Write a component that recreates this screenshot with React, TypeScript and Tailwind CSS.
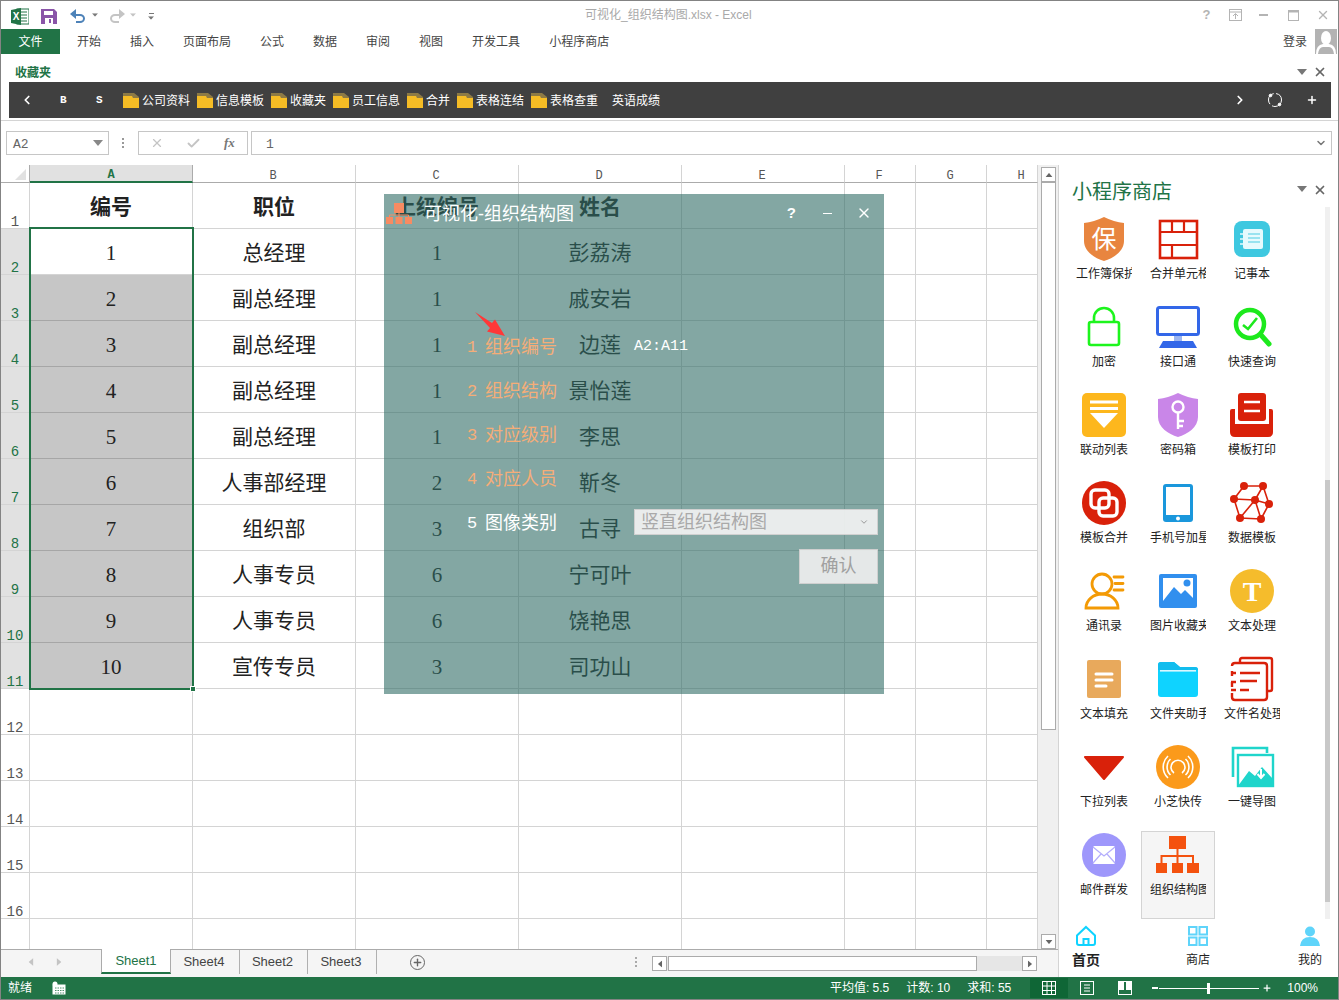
import React from 'react';
import { X, ChevronLeft, ChevronRight, Plus, ChevronDown, Check } from 'lucide-react';

const TABS = ['开始', '插入', '页面布局', '公式', '数据', '审阅', '视图', '开发工具', '小程序商店'];
const FAVORITES = ['公司资料', '信息模板', '收藏夹', '员工信息', '合并', '表格连结', '表格查重'];
const COLUMNS = ['A', 'B', 'C', 'D', 'E', 'F', 'G', 'H'];

const ROWS = [
  ['1', '总经理', '1', '彭荔涛'],
  ['2', '副总经理', '1', '戚安岩'],
  ['3', '副总经理', '1', '边莲'],
  ['4', '副总经理', '1', '景怡莲'],
  ['5', '副总经理', '1', '李思'],
  ['6', '人事部经理', '2', '靳冬'],
  ['7', '组织部', '3', '古寻'],
  ['8', '人事专员', '6', '宁可叶'],
  ['9', '人事专员', '6', '饶艳思'],
  ['10', '宣传专员', '3', '司功山'],
];

const RED = '#d9210a';

const Ico: React.FC<{ children: React.ReactNode }> = ({ children }) => (
  <svg width="48" height="48" viewBox="0 0 48 48" className="shrink-0">
    {children}
  </svg>
);

const SHIELD = 'M4 8Q14 7 24 2Q34 7 44 8V26C44 36 34 43 24 46C14 43 4 36 4 26Z';

const TOOLS: { label: string; icon: React.ReactNode; active?: boolean }[] = [
  {
    label: '工作簿保护',
    icon: (
      <>
        <path d={SHIELD} fill="#e8853f" />
        <text x="24" y="33" textAnchor="middle" fontSize="25" fill="#fff" fontFamily="Noto Sans CJK SC">保</text>
      </>
    ),
  },
  {
    label: '合并单元格',
    icon: (
      <g fill="none" stroke={RED} strokeWidth="2.2">
        <rect x="6" y="6" width="37" height="37" strokeWidth="2.6" />
        <path d="M6 17H43M6 30H43M18 6V17M30 6V17M18 30V43" />
      </g>
    ),
  },
  {
    label: '记事本',
    icon: (
      <>
        <rect x="6" y="6" width="36" height="36" rx="8" fill="#3ec8e0" />
        <rect x="15" y="14" width="20" height="20" rx="2" fill="#e6fafd" />
        <path d="M20 19H32M20 23H32M20 27H32" stroke="#7fdcec" strokeWidth="1.6" />
        <path d="M12 19H16M12 24H16M12 29H16" stroke="#e6fafd" strokeWidth="1.6" />
      </>
    ),
  },
  {
    label: '加密',
    icon: (
      <g fill="none" stroke="#1df51d" strokeWidth="2.6">
        <rect x="9" y="19" width="30" height="23" rx="2" />
        <path d="M14 19V15A10 10 0 0 1 34 15V19" />
      </g>
    ),
  },
  {
    label: '接口通',
    icon: (
      <>
        <rect x="3.5" y="4.5" width="41" height="27" rx="2" fill="#fff" stroke="#3367e8" strokeWidth="3" />
        <rect x="20" y="33" width="8" height="5" fill="#9db6f0" />
        <path d="M5 45L9 38H39L43 45Z" fill="#3367e8" />
      </>
    ),
  },
  {
    label: '快速查询',
    icon: (
      <g fill="none" stroke="#1de91d">
        <circle cx="22" cy="21" r="14" strokeWidth="4.5" />
        <path d="M33 32L41 41" strokeWidth="5" strokeLinecap="round" />
        <path d="M15 22L20 26L29 15" strokeWidth="2.6" />
      </g>
    ),
  },
  {
    label: '联动列表',
    icon: (
      <>
        <rect x="2" y="2" width="44" height="44" rx="5" fill="#fdb71d" />
        <path d="M10 11H38M10 17.5H38" stroke="#fff" strokeWidth="3" />
        <path d="M10 22H38L24 37Z" fill="#fff" />
      </>
    ),
  },
  {
    label: '密码箱',
    icon: (
      <>
        <path d={SHIELD} fill="#c986e8" />
        <g fill="none" stroke="#fff" strokeWidth="2.4">
          <circle cx="24" cy="16" r="5.5" />
          <path d="M24 22V38M24 30H30M24 35H29" />
        </g>
      </>
    ),
  },
  {
    label: '模板打印',
    icon: (
      <>
        <rect x="10" y="2" width="28" height="28" rx="3" fill={RED} />
        <path d="M16 11H32M16 20H32" stroke="#fff" strokeWidth="2.4" />
        <path d="M2 20Q2 18 4 18H7V33H41V18H43Q45 18 45 20V41Q45 46 40 46H7Q2 46 2 41Z" fill={RED} />
      </>
    ),
  },
  {
    label: '模板合并',
    icon: (
      <>
        <circle cx="24" cy="24" r="22" fill={RED} />
        <g fill="none" stroke="#fff" strokeWidth="3.4">
          <rect x="11" y="11" width="18" height="18" rx="4" />
          <rect x="19" y="19" width="18" height="18" rx="4" />
        </g>
      </>
    ),
  },
  {
    label: '手机号加星',
    icon: (
      <>
        <rect x="9" y="5" width="30" height="38" rx="3" fill="#1a97dc" />
        <rect x="12" y="8" width="24" height="28" fill="#fff" />
        <circle cx="24" cy="39.5" r="2" fill="#fff" />
      </>
    ),
  },
  {
    label: '数据模板',
    icon: (
      <>
        <path
          d="M16 7L35 7M16 7L6 20M35 7L27 21M6 20L27 21M35 7L41 25M27 21L41 25M27 21L12 39M6 20L12 39M12 39L33 40M41 25L33 40M27 21L33 40"
          stroke={RED}
          strokeWidth="1.6"
          fill="none"
        />
        {[[16, 7], [35, 7], [6, 20], [27, 21], [41, 25], [12, 39], [33, 40]].map(([cx, cy]) => (
          <circle key={`${cx}-${cy}`} cx={cx} cy={cy} r="4" fill={RED} />
        ))}
      </>
    ),
  },
  {
    label: '通讯录',
    icon: (
      <g fill="none" stroke="#f39a05" strokeWidth="2.8">
        <circle cx="22" cy="17" r="10" />
        <path d="M6 41A16 14 0 0 1 38 41Z" />
        <path d="M34 10H43M35 16.5H43M34 23H43" strokeLinecap="round" />
      </g>
    ),
  },
  {
    label: '图片收藏夹',
    icon: (
      <>
        <rect x="5" y="7" width="38" height="34" rx="2" fill="#318fee" />
        <rect x="9" y="11" width="30" height="23" fill="#fff" />
        <path d="M9 34L20 20L27 27L31 23L39 31V34Z" fill="#318fee" />
        <circle cx="33" cy="16" r="3.5" fill="#318fee" />
      </>
    ),
  },
  {
    label: '文本处理',
    icon: (
      <>
        <circle cx="24" cy="24" r="22" fill="#f5bc2c" />
        <text x="24" y="34" textAnchor="middle" fontSize="28" fontWeight="700" fill="#fff" fontFamily="Liberation Serif">T</text>
      </>
    ),
  },
  {
    label: '文本填充',
    icon: (
      <>
        <rect x="7" y="5" width="34" height="38" rx="2" fill="#e8a95c" />
        <path d="M16 19H32M16 25H32M16 31H26" stroke="#fff" strokeWidth="3" strokeLinecap="round" />
      </>
    ),
  },
  {
    label: '文件夹助手',
    icon: (
      <>
        <path d="M4 10Q4 7 7 7H20L26 12H41Q44 12 44 15V39Q44 42 41 42H7Q4 42 4 39Z" fill="#0fd3ff" />
        <path d="M4 10Q4 7 7 7H20L26 12H41Q44 12 44 15H4Z" fill="#12bdee" />
        <rect x="6" y="15" width="36" height="1.6" fill="#d9f7ff" />
      </>
    ),
  },
  {
    label: '文件名处理',
    icon: (
      <g fill="none" stroke={RED} strokeWidth="2.4">
        <path d="M12 8V5Q12 3 14 3H42Q44 3 44 5V34Q44 36 42 36H40" />
        <path d="M7 8H36Q39 8 39 11V42Q39 45 36 45H7Q4 45 4 42V38M4 32V27M4 21V16M4 11Q4 8 7 8" />
        <path d="M3 18H8M12 18H32M3 27H8M12 26H29M3 35H8M12 35H21" strokeWidth="2.6" />
      </g>
    ),
  },
  {
    label: '下拉列表',
    icon: <path d="M5 14H43L24 36Z" fill={RED} stroke={RED} strokeWidth="2" strokeLinejoin="round" />,
  },
  {
    label: '小芝快传',
    icon: (
      <>
        <circle cx="24" cy="24" r="22" fill="#fb9a1b" />
        <g fill="none" stroke="#fff" strokeWidth="1.6">
          <path d="M20 30A7 7 0 1 1 28 30" />
          <path d="M16.5 16A11 11 0 0 0 16.5 32M31.5 16A11 11 0 0 1 31.5 32" />
          <path d="M14 13A15 15 0 0 0 14 35M34 13A15 15 0 0 1 34 35" />
        </g>
      </>
    ),
  },
  {
    label: '一键导图',
    icon: (
      <>
        <path d="M5 34V5H39V10" fill="none" stroke="#1fd5cb" strokeWidth="2.6" />
        <rect x="10" y="12" width="35" height="31" fill="#fff" stroke="#1fd5cb" strokeWidth="2.4" />
        <path d="M10 43L21 28L27 33L34 24L45 36V43Z" fill="#1fd5cb" />
        <path d="M33 26V34M29.5 31L33 35L36.5 31" fill="none" stroke="#fff" strokeWidth="2" />
      </>
    ),
  },
  {
    label: '邮件群发',
    icon: (
      <>
        <circle cx="24" cy="24" r="22" fill="#9e97fb" />
        <rect x="13" y="15" width="22" height="18" rx="1.5" fill="#fff" />
        <path d="M13 16L24 25L35 16M13 32L21 23M35 32L27 23" fill="none" stroke="#b3adfc" strokeWidth="1.2" />
      </>
    ),
  },
  {
    label: '组织结构图',
    active: true,
    icon: (
      <g fill="#f4520f">
        <rect x="15" y="5" width="17" height="13" />
        <rect x="2" y="32" width="11" height="10" />
        <rect x="18" y="32" width="11" height="10" />
        <rect x="33" y="32" width="12" height="10" />
        <path d="M23.5 18V32M7.5 32V25H39V32" fill="none" stroke="#f4520f" strokeWidth="2" />
      </g>
    ),
  },
];

const CaretDown: React.FC<{ className?: string }> = ({ className }) => (
  <svg width="10" height="6" viewBox="0 0 10 6" className={className}>
    <path d="M0 0H10L5 6Z" fill="currentColor" />
  </svg>
);

const Folder: React.FC = () => (
  <svg width="16" height="15" viewBox="0 0 16 15" className="shrink-0">
    <path d="M0 0H11L16 4V14H0Z" fill="#8d7a45" />
    <path d="M0 3H9L10 5H16V15H0Z" fill="#f5bc25" />
  </svg>
);

const TitleBar: React.FC = () => (
  <div className="flex h-[28px] items-center relative">
    <svg width="18" height="17" viewBox="0 0 18 17" className="ml-[10px] mt-[2px]">
      <rect x="6" y="1" width="12" height="15" fill="#fff" stroke="#217346" />
      <path d="M10 4H16M10 7H16M10 10H16M10 13H16" stroke="#217346" />
      <path d="M0 2L10 0V17L0 15Z" fill="#217346" />
      <text x="5" y="12" textAnchor="middle" fontSize="10" fontWeight="700" fill="#fff" fontFamily="Liberation Sans">X</text>
    </svg>
    <svg width="16" height="15" viewBox="0 0 16 15" className="ml-[12px] mt-[2px]">
      <path d="M0 0H13L16 3V15H0Z" fill="#8a54a8" />
      <rect x="3" y="2" width="9" height="4" fill="#fff" />
      <rect x="4" y="9" width="8" height="6" fill="#fff" />
      <rect x="8" y="10" width="2" height="4" fill="#8a54a8" />
    </svg>
    <svg width="16" height="15" viewBox="0 0 16 15" className="ml-[13px] mt-[1px]">
      <path d="M4 7H10A4 3.5 0 0 1 10 14H6" fill="none" stroke="#4d82b8" strokeWidth="2" />
      <path d="M6 1V11L0 6Z" fill="#4d82b8" />
    </svg>
    <CaretDown className="ml-[4px] scale-[0.6] text-[#7a7a7a]" />
    <svg width="16" height="15" viewBox="0 0 16 15" className="ml-[9px] mt-[1px]">
      <path d="M12 7H6A4 3.5 0 0 0 6 14H10" fill="none" stroke="#c4c4c4" strokeWidth="2" />
      <path d="M10 1V11L16 6Z" fill="#c4c4c4" />
    </svg>
    <CaretDown className="ml-[3px] scale-[0.6] text-[#c4c4c4]" />
    <div className="ml-[8px] mt-[3px] flex flex-col items-center gap-[2px]">
      <div className="w-[5px] h-px bg-[#777]" />
      <CaretDown className="scale-[0.6] -mt-[1px] text-[#777]" />
    </div>
    <div className="absolute left-[584px] top-[6px] text-[12px] leading-[16px] text-[#a9a9a9]">可视化_组织结构图.xlsx - Excel</div>
    <div className="ml-auto flex items-center text-[#b4b4b4]">
      <span className="w-[29px] text-center text-[13px] font-bold">?</span>
      <svg width="13" height="12" viewBox="0 0 13 12" className="ml-[8px]">
        <rect x="0.5" y="0.5" width="12" height="11" fill="none" stroke="currentColor" />
        <path d="M0 3H13M6.5 10V5M4 7L6.5 4.5L9 7" fill="none" stroke="currentColor" />
      </svg>
      <div className="ml-[17px] w-[9px] h-[2px] bg-current" />
      <svg width="11" height="11" viewBox="0 0 11 11" className="ml-[20px]">
        <rect x="0.5" y="0.5" width="10" height="10" fill="none" stroke="currentColor" />
        <path d="M0 1.5H11" stroke="currentColor" strokeWidth="2" />
      </svg>
      <X size={14} strokeWidth={2.4} className="ml-[17px] mr-[8px]" />
    </div>
  </div>
);

const RibbonTabs: React.FC = () => (
  <div className="flex h-[25px] items-center text-[12px] text-[#444]">
    <div className="flex h-full w-[59px] items-center justify-center bg-[#217346] text-white">文件</div>
    <div className="ml-[17px] flex gap-[29px]">
      {TABS.map((tab) => (
        <span key={tab}>{tab}</span>
      ))}
    </div>
    <span className="ml-auto mr-[8px]">登录</span>
    <svg width="22" height="25" viewBox="0 0 22 25" className="mr-[1px]">
      <rect width="22" height="25" fill="#b3b3b3" />
      <ellipse cx="11" cy="9" rx="5" ry="7" fill="#fff" />
      <path d="M1 25Q1 16 8 15H14Q21 16 21 25H19Q18 18 14 18H8Q4 18 3 25Z" fill="#fff" />
    </svg>
  </div>
);

const FavoritesBar: React.FC = () => (
  <div className="h-[67px] border-b border-[#d4d4d4] pt-[8px]">
    <div className="flex h-[20px] items-center pl-[14px] pr-[11px] text-[12px] font-bold text-[#217346]">
      <span className="mt-[2px]">收藏夹</span>
      <CaretDown className="ml-auto text-[#777]" />
      <X size={14} strokeWidth={3} className="ml-[6px] text-[#666]" />
    </div>
    <div className="ml-[8px] flex h-[36px] w-[1322px] items-center bg-[#404040] text-[12px] text-white">
      <ChevronLeft size={14} strokeWidth={3} className="ml-[11px]" />
      <span className="ml-[26px] w-[8px] font-['Liberation_Mono',monospace] text-[11px] font-bold">B</span>
      <span className="ml-[28px] w-[8px] font-['Liberation_Mono',monospace] text-[11px] font-bold">S</span>
      <div className="ml-[19px] flex items-center gap-[7px]">
        {FAVORITES.map((name) => (
          <div key={name} className="flex items-center gap-[3px]">
            <Folder />
            <span className="mt-[2px]">{name}</span>
          </div>
        ))}
        <span className="ml-[7px] mt-[2px]">英语成绩</span>
      </div>
      <ChevronRight size={14} strokeWidth={3} className="ml-auto mr-[20px]" />
      <svg width="16" height="16" viewBox="0 0 16 16" className="mr-[23px]" fill="none" stroke="#fff">
        <circle cx="8" cy="8" r="6.5" strokeDasharray="13 2.5 13 2.5" />
        <circle cx="3.5" cy="3.5" r="1.3" fill="#fff" />
        <circle cx="12.5" cy="12.5" r="1.3" fill="#fff" />
      </svg>
      <Plus size={12} strokeWidth={3} className="mr-[13px]" />
    </div>
  </div>
);

const FormulaBar: React.FC = () => (
  <div className="flex h-[44px] items-start pl-[5px] pt-[10px] text-[#666]">
    <div className="flex h-[24px] w-[103px] items-center border border-[#c6c6c6] pl-[6px] pr-[5px] font-['Liberation_Mono',monospace] text-[13px]">
      <span className="mt-[3px]">A2</span>
      <CaretDown className="ml-auto text-[#888]" />
    </div>
    <div className="ml-[13px] mt-[7px] flex flex-col gap-[2px]">
      <i className="h-[2px] w-[2px] bg-[#999]" />
      <i className="h-[2px] w-[2px] bg-[#999]" />
      <i className="h-[2px] w-[2px] bg-[#999]" />
    </div>
    <div className="ml-[14px] flex h-[24px] w-[110px] items-center border border-[#c6c6c6]">
      <X size={14} strokeWidth={2} className="ml-[11px] text-[#c4c4c4]" />
      <Check size={15} strokeWidth={3} className="ml-[22px] text-[#c4c4c4]" />
      <span className="ml-[23px] font-['Liberation_Serif',serif] text-[13px] font-bold italic text-[#777]">fx</span>
    </div>
    <div className="ml-[3px] flex h-[24px] w-[1081px] items-center border border-[#c6c6c6] pl-[14px] pr-[4px] font-['Liberation_Mono',monospace] text-[13px]">
      <span className="mt-[3px]">1</span>
      <ChevronDown size={12} strokeWidth={3} className="ml-auto text-[#777]" />
    </div>
  </div>
);

const Sheet: React.FC = () => {
  const cell = 'flex items-center justify-center border-r border-b border-[#d4d4d4] min-w-0 whitespace-nowrap pt-[4px]';
  const rowHead = "flex items-end justify-center border-r border-b border-[#d4d4d4] font-['Liberation_Mono',monospace] text-[14px] leading-[12px]";
  const colHead = "flex items-center justify-center border-r border-b border-r-[#d4d4d4] border-b-[#ababab] pt-[4px] font-['Liberation_Mono',monospace] text-[12px] text-[#555]";
  const empty = [12, 13, 14, 15, 16];

  return (
    <div className="relative grid h-[784px] w-[1037px] grid-cols-[29px_163px_163px_163px_163px_163px_71px_71px_51px] grid-rows-[18px_repeat(16,46px)_30px] overflow-hidden font-['Liberation_Serif','Noto_Sans_CJK_SC',serif] text-[21px] text-[#222]">
      <div className="flex items-end justify-end border-r border-b border-[#ababab] pb-[2px] pr-[3px]">
        <svg width="11" height="11" viewBox="0 0 11 11">
          <path d="M11 0V11H0Z" fill="#e1e1e1" />
        </svg>
      </div>
      <div className="flex items-center justify-center border-r border-b-2 border-r-[#ababab] border-b-[#217346] bg-[#e1e1e1] pt-[4px] font-['Liberation_Mono',monospace] text-[12px] font-bold text-[#217346]">A</div>
      <div className={`${colHead} pr-[2px]`}>B</div>
      <div className={`${colHead} pr-[2px]`}>C</div>
      <div className={`${colHead} pr-[2px]`}>D</div>
      <div className={`${colHead} pr-[2px]`}>E</div>
      <div className={`${colHead} pr-[2px]`}>F</div>
      <div className={`${colHead} pr-[2px]`}>G</div>
      {/* H is cut by the scrollbar, its label stays centred on the full width */}
      <div className={`${colHead} pl-[18px]`}>H</div>

      <div className={`${rowHead} text-[#555]`}>1</div>
      <div className={`${cell} font-bold`}>编号</div>
      <div className={`${cell} font-bold`}>职位</div>
      <div className={`${cell} font-bold`}>上级编号</div>
      <div className={`${cell} font-bold`}>姓名</div>
      <div className={cell} />
      <div className={cell} />
      <div className={cell} />
      <div className={cell} />

      {ROWS.map((row, i) => (
        <React.Fragment key={row[0]}>
          <div className={`${rowHead} bg-[#e1e1e1] text-[#217346]`}>{i + 2}</div>
          <div className={i === 0 ? cell : `${cell} border-b-[#a6a6a6] border-r-white bg-[#c6c6c6]`}>{row[0]}</div>
          <div className={cell}>{row[1]}</div>
          <div className={cell}>{row[2]}</div>
          <div className={cell}>{row[3]}</div>
          <div className={cell} />
          <div className={cell} />
          <div className={cell} />
          <div className={cell} />
        </React.Fragment>
      ))}

      {empty.map((n) => (
        <React.Fragment key={n}>
          <div className={`${rowHead} text-[#555]`}>{n}</div>
          {COLUMNS.map((col) => (
            <div key={col} className={cell} />
          ))}
        </React.Fragment>
      ))}
      <div className="border-r border-[#d4d4d4]" />
      {COLUMNS.map((col) => (
        <div key={col} className="border-r border-[#d4d4d4]" />
      ))}

      {/* selection frame */}
      <div className="absolute left-[28px] top-[62px] h-[463px] w-[165px] border-2 border-[#217346]" />
      <div className="absolute left-[189px] top-[521px] h-[6px] w-[6px] border border-white bg-[#217346]" />
    </div>
  );
};

const ScrollV: React.FC = () => (
  <div className="flex w-[20px] flex-col items-center bg-[#f0f0f0] pl-[3px] pt-[2px] pr-[2px]">
    <div className="flex h-[15px] w-[15px] items-center justify-center border border-[#ababab] bg-white text-[#666]">
      <CaretDown className="rotate-180 scale-[0.7]" />
    </div>
    <div className="h-[548px] w-[15px] border border-[#ababab] bg-white" />
    <div className="flex-1" />
    <div className="flex h-[15px] w-[15px] items-center justify-center border border-[#ababab] bg-white text-[#666]">
      <CaretDown className="scale-[0.7]" />
    </div>
  </div>
);

const SheetTabs: React.FC = () => (
  <div className="flex h-[28px] items-start border-t border-[#ababab] bg-[#f5f5f5] text-[13px] text-[#444]">
    <div className="flex h-[24px] w-[100px] items-center text-[#c4c4c4]">
      <CaretDown className="ml-[25px] rotate-90 scale-[0.8]" />
      <CaretDown className="ml-[18px] -rotate-90 scale-[0.8]" />
    </div>
    <div className="-mt-px flex h-[25px] w-[70px] items-center justify-center border-x border-b-2 border-x-[#ababab] border-b-[#217346] bg-white text-[#217346]">Sheet1</div>
    <span className="flex h-[24px] w-[69px] items-center justify-center border-r border-[#b0b0b0] pr-[2px]">Sheet4</span>
    <span className="flex h-[24px] w-[68px] items-center justify-center border-r border-[#b0b0b0] pr-[2px]">Sheet2</span>
    <span className="flex h-[24px] w-[69px] items-center justify-center border-r border-[#b0b0b0] pr-[2px]">Sheet3</span>
    <div className="ml-[33px] mt-[5px] flex h-[15px] w-[15px] items-center justify-center rounded-full border border-[#666] text-[#666]">
      <Plus size={11} strokeWidth={3} />
    </div>
    <div className="ml-[210px] mt-[7px] flex flex-col gap-[2px]">
      <i className="h-[2px] w-[2px] bg-[#aaa]" />
      <i className="h-[2px] w-[2px] bg-[#aaa]" />
      <i className="h-[2px] w-[2px] bg-[#aaa]" />
    </div>
    <div className="ml-[15px] mt-[6px] flex h-[15px] w-[385px] bg-[#e6e6e6]">
      <div className="flex w-[15px] items-center justify-center border border-[#ababab] bg-white text-[#666]">
        <CaretDown className="rotate-90 scale-[0.7]" />
      </div>
      <div className="ml-px w-[309px] border border-[#ababab] bg-white" />
      <div className="ml-auto flex w-[15px] items-center justify-center border border-[#ababab] bg-white text-[#666]">
        <CaretDown className="-rotate-90 scale-[0.7]" />
      </div>
    </div>
  </div>
);

const StorePanel: React.FC = () => (
  <aside className="flex w-[280px] flex-col border-l border-[#d4d4d4] text-[12px] text-[#222]">
    <div className="flex h-[42px] items-start pl-[13px] pr-[11px] pt-[17px]">
      <span className="text-[20px] leading-[20px] text-[#217346]">小程序商店</span>
      <CaretDown className="ml-auto mt-[4px] text-[#777]" />
      <X size={14} strokeWidth={3} className="ml-[6px] mt-[1px] text-[#666]" />
    </div>
    <div className="flex h-[712px] pl-[8px]">
      <div className="grid h-[704px] mt-[8px] w-[222px] grid-cols-[repeat(3,74px)] auto-rows-[88px]">
        {TOOLS.map((tool) => (
          <div
            key={tool.label}
            className={
              tool.active
                ? 'flex flex-col items-center bg-[#f5f5f5] outline outline-1 -outline-offset-1 outline-[#d4d4d4]'
                : 'flex flex-col items-center'
            }
          >
            <Ico>{tool.icon}</Ico>
            <span className="mt-[3px] w-[56px] overflow-hidden whitespace-nowrap text-center leading-[16px]">{tool.label}</span>
          </div>
        ))}
      </div>
      <div className="ml-[36px] h-[712px] w-[5px] bg-[#f0f0f0]">
        <div className="mt-[273px] h-[422px] bg-[#c8c8c8]" />
      </div>
    </div>
    <nav className="flex h-[58px] justify-between">
      <div className="-ml-px flex w-[56px] flex-col items-center pt-[6px]">
        <svg width="22" height="22" viewBox="0 0 22 22">
          <path d="M11 2L20 10.5V18Q20 20 18 20H4Q2 20 2 18V10.5Z" fill="none" stroke="#0fd3ff" strokeWidth="2" />
          <path d="M8.5 20V14H13.5V20" fill="none" stroke="#0fd3ff" strokeWidth="2" />
        </svg>
        <span className="mt-[3px] text-[14px] font-bold leading-[20px]">首页</span>
      </div>
      <div className="flex w-[56px] flex-col items-center pt-[6px]">
        <svg width="22" height="22" viewBox="0 0 22 22" fill="none" stroke="#5fd4fa" strokeWidth="2">
          <rect x="2" y="2" width="7.5" height="7.5" />
          <rect x="12.5" y="2" width="7.5" height="7.5" />
          <rect x="2" y="12.5" width="7.5" height="7.5" />
          <rect x="12.5" y="12.5" width="7.5" height="7.5" />
        </svg>
        <span className="mt-[5px] leading-[16px]">商店</span>
      </div>
      <div className="flex w-[56px] flex-col items-center pt-[6px]">
        <svg width="22" height="22" viewBox="0 0 22 22" fill="#5fd4fa">
          <circle cx="11" cy="6.5" r="5" />
          <path d="M1 21Q2 12 11 12Q20 12 21 21Z" />
        </svg>
        <span className="mt-[5px] leading-[16px]">我的</span>
      </div>
    </nav>
  </aside>
);

const StatusBar: React.FC = () => (
  <div className="flex h-[22px] items-center bg-[#217346] pl-[7px] text-[12px] text-white">
    <span>就绪</span>
    <svg width="14" height="14" viewBox="0 0 14 14" className="ml-[20px]">
      <rect x="0.5" y="3.5" width="13" height="10" fill="#fff" />
      <circle cx="3" cy="3" r="2.5" fill="#fff" />
      <path d="M3 7H12M3 9.5H12M3 12H12" stroke="#217346" strokeWidth="0.8" strokeDasharray="1.5 1" />
    </svg>
    <span className="ml-auto">平均值: 5.5</span>
    <span className="ml-[17px]">计数: 10</span>
    <span className="ml-[17px]">求和: 55</span>
    <div className="ml-[19px] flex h-[20px] w-[38px] items-center justify-center bg-[#0f6636]">
      <svg width="14" height="14" viewBox="0 0 14 14" fill="none" stroke="#fff">
        <rect x="0.5" y="0.5" width="13" height="13" />
        <path d="M0 5H14M0 9.5H14M5 0V14M9.5 0V14" />
      </svg>
    </div>
    <svg width="14" height="14" viewBox="0 0 14 14" fill="none" stroke="#fff" className="ml-[12px]">
      <rect x="0.5" y="0.5" width="13" height="13" />
      <path d="M4 4H10M4 7H10M4 10H10" />
    </svg>
    <svg width="14" height="14" viewBox="0 0 14 14" className="ml-[24px]">
      <rect x="0.5" y="0.5" width="13" height="13" fill="none" stroke="#fff" />
      <rect x="1" y="1" width="5" height="8" fill="#fff" />
      <rect x="8" y="1" width="5" height="8" fill="#fff" />
    </svg>
    <div className="ml-[20px] h-[2px] w-[6px] bg-white" />
    <div className="ml-[1px] relative h-px w-[100px] bg-white">
      <div className="absolute left-[48px] -top-[5px] h-[11px] w-[3px] bg-white" />
    </div>
    <Plus size={10} strokeWidth={3} className="ml-[3px]" />
    <span className="ml-[15px] mr-[20px]">100%</span>
  </div>
);

const DIALOG_ROWS = [
  { no: '1', text: '组织编号', value: 'A2:A11' },
  { no: '2', text: '组织结构' },
  { no: '3', text: '对应级别' },
  { no: '4', text: '对应人员' },
];

const Dialog: React.FC = () => (
  <div className="absolute left-[383px] top-[193px] flex h-[500px] w-[500px] flex-col bg-[#306c66]/60 text-[18px] text-[#f5ad78]">
    <div className="flex h-[38px] items-center text-white">
      <svg width="26" height="21" viewBox="0 0 26 21" className="ml-[2px] mt-[1px]" fill="#f78b62">
        <rect x="8" y="0" width="10" height="10" />
        <rect x="0" y="14" width="7" height="7" />
        <rect x="9.5" y="14" width="7" height="7" />
        <rect x="19" y="14" width="7" height="7" />
        <path d="M13 10V14M3.5 14V12H22.5V14" fill="none" stroke="#f78b62" />
      </svg>
      <span className="ml-[12px] mt-[1px] leading-[20px]">可视化-组织结构图</span>
      <span className="ml-auto font-['Liberation_Sans',sans-serif] text-[15px] font-bold">?</span>
      <div className="ml-[27px] h-px w-[9px] bg-white" />
      <X size={16} strokeWidth={2} className="ml-[24px] mr-[12px]" />
    </div>
    <div className="flex flex-col pt-[92px]">
      {DIALOG_ROWS.map((row) => (
        <div key={row.no} className="flex h-[44px] items-center pl-[83px]">
          <span className="mt-[3px] w-[18px] font-['Liberation_Mono',monospace] text-[17px]">{row.no}</span>
          <span className="mt-[3px] w-[149px]">{row.text}</span>
          {row.value && <span className="mt-[3px] font-['Liberation_Mono',monospace] text-[15px] text-white">{row.value}</span>}
        </div>
      ))}
      <div className="flex h-[44px] items-center pl-[83px] text-white">
        <span className="mt-[3px] w-[18px] font-['Liberation_Mono',monospace] text-[17px]">5</span>
        <span className="mt-[3px] w-[149px]">图像类别</span>
        <div className="flex h-[26px] w-[244px] items-center border border-[#d0d0d0] bg-[#f4f4f4]/90 pl-[6px] pr-[8px] text-[#a9a9a9]">
          竖直组织结构图
          <ChevronDown size={10} className="ml-auto text-[#888]" />
        </div>
      </div>
      <div className="mr-[6px] mt-[5px] flex h-[35px] w-[79px] items-center justify-center self-end border border-[#cfcfcf] bg-[#f0f0f0]/90 text-[#a0a0a0]">确认</div>
    </div>
    {/* red pointer added on the picture */}
    <svg width="30" height="25" viewBox="0 0 30 25" className="absolute left-[91px] top-[118px]">
      <path d="M0 0L17 11L20 7.5L30 24L12 19.5L15 16Z" fill="#ff3838" />
    </svg>
  </div>
);

export default function App() {
  return (
    <div className="relative h-[1000px] w-[1339px] overflow-hidden border border-[#838383] bg-white font-['Liberation_Sans','Noto_Sans_CJK_SC',sans-serif]">
      <TitleBar />
      <RibbonTabs />
      <FavoritesBar />
      <FormulaBar />
      <main className="flex h-[812px]">
        <div className="flex w-[1057px] flex-col">
          <div className="flex h-[784px]">
            <Sheet />
            <ScrollV />
          </div>
          <SheetTabs />
        </div>
        <StorePanel />
      </main>
      <StatusBar />
      <Dialog />
    </div>
  );
}
